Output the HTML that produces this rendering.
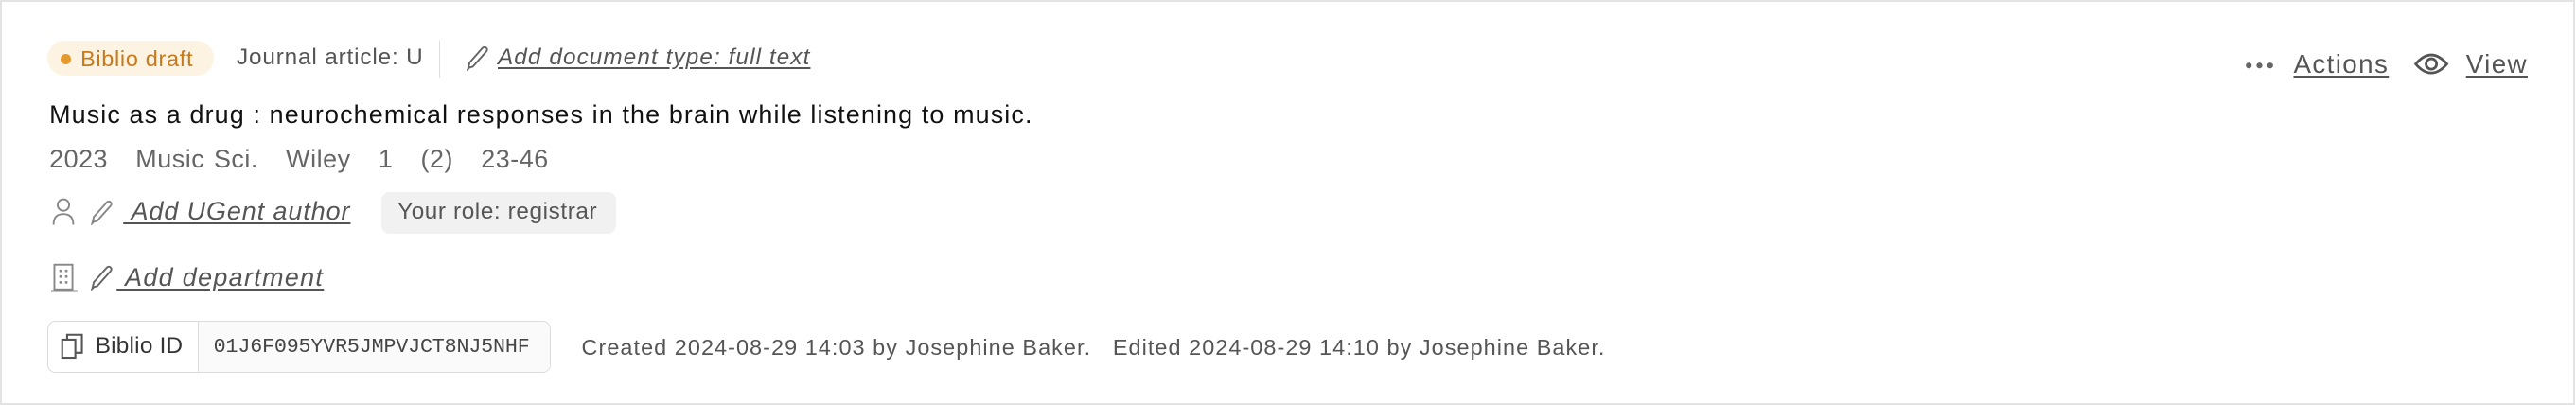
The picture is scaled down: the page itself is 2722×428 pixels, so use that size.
<!DOCTYPE html>
<html><head><meta charset="utf-8"><style>
html,body{margin:0;padding:0;background:#fff;}
body{width:2722px;height:428px;overflow:hidden;}
#z{zoom:1.736;width:1568px;height:246.5px;position:relative;font-family:"Liberation Sans",Arial,sans-serif;}
.frame{position:absolute;left:0;top:0;width:1565px;height:244px;border:1.5px solid #e3e3e3;}
.a{position:absolute;white-space:nowrap;letter-spacing:0.05em;}
.badge{left:29px;top:25px;width:101px;height:21px;background:#fdf3e2;border-radius:11px;}
.badge .dot{position:absolute;left:8px;top:8px;width:6px;height:6px;border-radius:3px;background:#e39a2e;}
.badge span{position:absolute;left:20px;top:3px;font-size:13.5px;color:#c7791b;letter-spacing:0.03em;}
.g{color:#555;}
.u{text-decoration:underline;text-underline-offset:2px;font-style:italic;color:#555;}
svg{position:absolute;}
</style></head><body><div id="z">
<div class="frame"></div>
<div class="a badge"><div class="dot"></div><span>Biblio draft</span></div>
<div class="a g" style="left:144px;top:27px;font-size:14px;letter-spacing:0.035em;">Journal article: U</div>
<div class="a" style="left:267px;top:25px;width:1px;height:22px;background:#ddd;"></div>
<svg style="left:283px;top:27px" width="15" height="16" viewBox="0 0 15 16"><path d="M3 14 L2 15 L3 11 L11 2 Q12.5 1 13.5 2.5 Q14 3.5 13 4.5 L5 13.5 Z" fill="none" stroke="#666" stroke-width="1.1"/></svg>
<div class="a u" style="left:303px;top:27px;font-size:14px;letter-spacing:0.045em;">Add document type: full text</div>

<div class="a" style="left:30px;top:61px;font-size:15.5px;color:#111;letter-spacing:0.042em;">Music as a drug : neurochemical responses in the brain while listening to music.</div>
<div class="a" style="left:30px;top:88px;font-size:15.5px;color:#666;letter-spacing:0.02em;word-spacing:1px;">2023&nbsp;&nbsp;&nbsp;Music Sci.&nbsp;&nbsp;&nbsp;Wiley&nbsp;&nbsp;&nbsp;1&nbsp;&nbsp;&nbsp;(2)&nbsp;&nbsp;&nbsp;23-46</div>

<svg style="left:31px;top:120px" width="15" height="18" viewBox="0 0 15 18"><circle cx="7.5" cy="5" r="3.5" fill="none" stroke="#888" stroke-width="1.1"/><path d="M1.5 17 Q1.5 10.5 7.5 10.5 Q13.5 10.5 13.5 17" fill="none" stroke="#888" stroke-width="1.1"/></svg>
<svg style="left:54px;top:121px" width="15" height="16" viewBox="0 0 15 16"><path d="M3 14 L2 15 L3 11 L11 2 Q12.5 1 13.5 2.5 Q14 3.5 13 4.5 L5 13.5 Z" fill="none" stroke="#888" stroke-width="1.1"/></svg>
<div class="a u" style="left:75px;top:120px;font-size:15.5px;letter-spacing:0.035em;">&nbsp;Add UGent author</div>
<div class="a" style="left:232px;top:117px;width:143px;height:25px;background:#f1f1f1;border-radius:5px;"></div>
<div class="a g" style="left:242px;top:121px;font-size:14px;letter-spacing:0.025em;">Your role: registrar</div>

<svg style="left:31px;top:160px" width="16" height="18" viewBox="0 0 16 18"><rect x="2" y="1" width="11" height="15" fill="none" stroke="#888" stroke-width="1.1"/><path d="M0 17 H16" stroke="#888" stroke-width="1.2"/><g fill="#888"><rect x="5" y="4" width="1.5" height="1.5"/><rect x="8.5" y="4" width="1.5" height="1.5"/><rect x="5" y="7.5" width="1.5" height="1.5"/><rect x="8.5" y="7.5" width="1.5" height="1.5"/><rect x="5" y="11" width="1.5" height="1.5"/><rect x="8.5" y="11" width="1.5" height="1.5"/></g></svg>
<svg style="left:54px;top:161px" width="15" height="16" viewBox="0 0 15 16"><path d="M3 14 L2 15 L3 11 L11 2 Q12.5 1 13.5 2.5 Q14 3.5 13 4.5 L5 13.5 Z" fill="none" stroke="#666" stroke-width="1.1"/></svg>
<div class="a u" style="left:71px;top:160px;font-size:15.5px;">&nbsp;Add department</div>

<div class="a" style="left:29px;top:195px;width:305px;height:31px;border:1px solid #dcdcdc;border-radius:5px;overflow:hidden;">
 <div style="position:absolute;left:91px;top:0;width:214px;height:31px;background:#fafafa;border-left:1px solid #dcdcdc;"></div>
</div>
<svg style="left:37px;top:203px" width="15" height="16" viewBox="0 0 15 16"><rect x="1" y="4" width="8" height="11" fill="none" stroke="#555" stroke-width="1.2"/><path d="M4 4 V1 H13 V12 H9" fill="none" stroke="#555" stroke-width="1.2"/></svg>
<div class="a" style="left:58px;top:203px;font-size:14px;color:#333;letter-spacing:0.01em;">Biblio ID</div>
<div class="a" style="left:130px;top:204px;font-size:12.5px;color:#444;font-family:'Liberation Mono','DejaVu Sans Mono',monospace;letter-spacing:-0.1px;">01J6F095YVR5JMPVJCT8NJ5NHF</div>
<div class="a g" style="left:354px;top:204px;font-size:13.5px;letter-spacing:0.045em;">Created 2024-08-29 14:03 by Josephine Baker.&nbsp;&nbsp; Edited 2024-08-29 14:10 by Josephine Baker.</div>

<svg style="left:1366px;top:37px" width="20" height="6" viewBox="0 0 20 6"><circle cx="3" cy="3" r="1.8" fill="#666"/><circle cx="9.5" cy="3" r="1.8" fill="#666"/><circle cx="16" cy="3" r="1.8" fill="#666"/></svg>
<div class="a" style="left:1396px;top:30px;font-size:16px;color:#555;text-decoration:underline;text-underline-offset:2px;">Actions</div>
<svg style="left:1469px;top:30px" width="22" height="18" viewBox="0 0 22 18"><path d="M1.5 9 Q11 -2 20.5 9 Q11 20 1.5 9 Z" fill="none" stroke="#555" stroke-width="1.6"/><circle cx="11" cy="9" r="3.2" fill="none" stroke="#555" stroke-width="1.6"/></svg>
<div class="a" style="left:1501px;top:30px;font-size:16px;color:#555;text-decoration:underline;text-underline-offset:2px;">View</div>
</div></body></html>
